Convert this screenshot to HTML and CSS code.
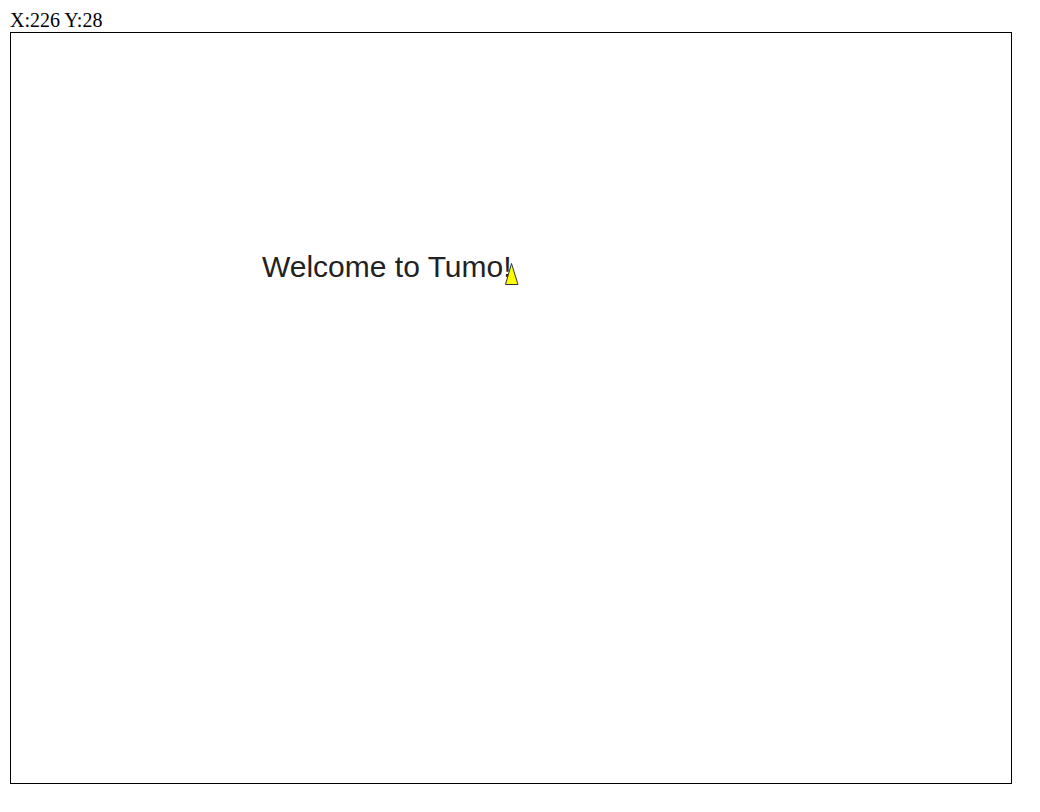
FILE: index.html
```html
<!DOCTYPE html>
<html>
<head>
<meta charset="utf-8">
<link rel="stylesheet" href="styles.css">
</head>
<body>
<div class="coords">X:226 Y:28</div>
<div class="stage">
  <span class="welcome">Welcome to Tumo!</span>
  <svg class="pointer" width="16" height="24" viewBox="0 0 16 24">
    <polygon points="7.5,1.5 1.5,22.5 14,22.5" fill="#ffff00" stroke="#333" stroke-width="1"/>
  </svg>
</div>
</body>
</html>
```

FILE: styles.css
```css
html, body {
  background: #fff;
}
body {
  margin: 9px 10px;
  font-family: "Liberation Serif", "Times New Roman", serif;
  font-size: 20px;
  color: #000;
}
.coords {
  line-height: 22px;
  height: 22px;
}
.stage {
  position: relative;
  width: 1000px;
  height: 750px;
  border: 1px solid #000;
  margin-top: 1px;
}
.welcome {
  position: absolute;
  left: 251px;
  top: 219px;
  font-family: "Liberation Sans", Arial, sans-serif;
  font-size: 30px;
  line-height: 30px;
  color: #222;
  white-space: nowrap;
}
.pointer {
  position: absolute;
  left: 493px;
  top: 229px;
}
```
